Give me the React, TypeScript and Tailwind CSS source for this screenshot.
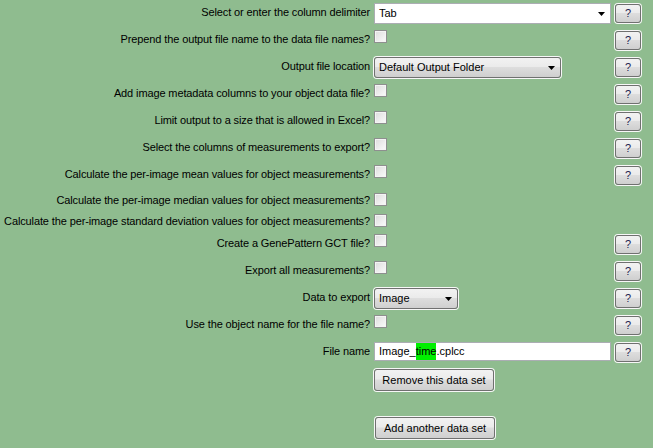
import type { ReactNode } from 'react'

const btnBg =
  'bg-[linear-gradient(#f2f2f2,#ebebeb_45%,#dddddd_50%,#cfcfcf)] border border-[#707070] rounded-[3px] shadow-[0_0_0_1px_#f7f7f7]'

function HelpButton() {
  return (
    <div className={`w-[26px] h-[19px] ml-[1px] mt-[1px] flex items-center justify-center text-[11px] leading-none text-[#1c1c50] ${btnBg}`}>
      ?
    </div>
  )
}

function Arrow() {
  return (
    <svg width="7" height="4" viewBox="0 0 7 4">
      <path d="M0 0h7L3.5 4z" fill="#000" />
    </svg>
  )
}

function Check() {
  return (
    <div className="w-[13px] h-[13px] border border-[#8e8f8f] bg-[linear-gradient(135deg,#dcdcdc,#fbfbfb)] shadow-[inset_0_0_0_1px_#f4f4f4]" />
  )
}

function Choice({ value, width }: { value: string; width: string }) {
  return (
    <div className={`${width} h-[21px] flex items-center justify-between pl-[4px] pr-[5px] ${btnBg}`}>
      <span>{value}</span>
      <Arrow />
    </div>
  )
}

function Row({ label, children, help = true }: { label: string; children?: ReactNode; help?: boolean }) {
  return (
    <div className={`flex ${help ? 'h-[27px]' : 'h-[21px]'}`}>
      <div className={`w-[370px] text-right leading-[14px] whitespace-nowrap tracking-[-0.12px] ${help ? 'pt-[5px]' : 'pt-[4px]'}`}>{label}</div>
      <div className={`ml-[4px] w-[236px] ${help ? 'pt-[3px]' : 'pt-[4px]'}`}>{children}</div>
      {help && (
        <div className="ml-[4px] pt-[3px]">
          <HelpButton />
        </div>
      )}
    </div>
  )
}

export default function App() {
  return (
    <div className="w-[653px] h-[448px] bg-[#8fbc8f] text-black text-[11px] font-['Liberation_Sans',Arial,sans-serif] overflow-hidden">
      <Row label="Select or enter the column delimiter">
        <div className="w-[237px] h-[21px] bg-white border border-[#abadb3] flex items-center justify-between pl-[4px] pr-[5px]">
          <span>Tab</span>
          <Arrow />
        </div>
      </Row>
      <Row label="Prepend the output file name to the data file names?">
        <Check />
      </Row>
      <Row label="Output file location">
        <Choice value="Default Output Folder" width="w-[187px]" />
      </Row>
      <Row label="Add image metadata columns to your object data file?">
        <Check />
      </Row>
      <Row label="Limit output to a size that is allowed in Excel?">
        <Check />
      </Row>
      <Row label="Select the columns of measurements to export?">
        <Check />
      </Row>
      <Row label="Calculate the per-image mean values for object measurements?">
        <Check />
      </Row>
      <Row label="Calculate the per-image median values for object measurements?" help={false}>
        <Check />
      </Row>
      <Row label="Calculate the per-image standard deviation values for object measurements?" help={false}>
        <Check />
      </Row>
      <Row label="Create a GenePattern GCT file?">
        <Check />
      </Row>
      <Row label="Export all measurements?">
        <Check />
      </Row>
      <Row label="Data to export">
        <Choice value="Image" width="w-[84px]" />
      </Row>
      <Row label="Use the object name for the file name?">
        <Check />
      </Row>
      <Row label="File name">
        <div className="w-[237px] h-[19px] bg-white border border-[#abadb3] flex items-center pl-[4px]">
          <span>Image_</span>
          <span className="bg-[#00f000]">time</span>
          <span>.cplcc</span>
        </div>
      </Row>
      <div className="flex flex-col items-start pl-[374px] pt-[3px] gap-[26px]">
        <div className={`w-[120px] h-[22px] flex items-center justify-center ${btnBg}`}>Remove this data set</div>
        <div className={`w-[120px] h-[22px] ml-[1px] flex items-center justify-center ${btnBg}`}>Add another data set</div>
      </div>
    </div>
  )
}
